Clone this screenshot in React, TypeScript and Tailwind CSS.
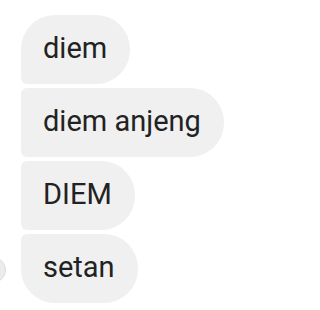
import React from 'react';

type Msg = {
  text: string;
  corner: string;
};

const messages: Msg[] = [
  { text: 'diem', corner: 'rounded-tl-[34px] rounded-bl-[6px]' },
  { text: 'diem anjeng', corner: 'rounded-tl-[6px] rounded-bl-[6px]' },
  { text: 'DIEM', corner: 'rounded-tl-[6px] rounded-bl-[6px]' },
  { text: 'setan', corner: 'rounded-tl-[6px] rounded-bl-[34px]' },
];

const App = () => {
  return (
    <div className="w-[320px] h-[310px] bg-white overflow-hidden relative font-['Roboto',sans-serif]">
      {/* Avatar peeking from the left */}
      <div className="absolute left-[-20px] top-[257px] h-[26px] w-[26px] rounded-full bg-[#ececec] border border-[#dddddd]" />

      {/* Bubbles */}
      <div className="flex flex-col items-start gap-[4px] pt-[15px] pl-[21px]">
        {messages.map((m) => (
          <div
            key={m.text}
            className={`flex h-[69px] items-center bg-[#f0f0f0] pl-[22px] pr-[23px] rounded-r-[34px] ${m.corner}`}
          >
            <span className="text-[29px] leading-none text-[#222222] pb-[2px]">{m.text}</span>
          </div>
        ))}
      </div>
    </div>
  );
};

export default App;
